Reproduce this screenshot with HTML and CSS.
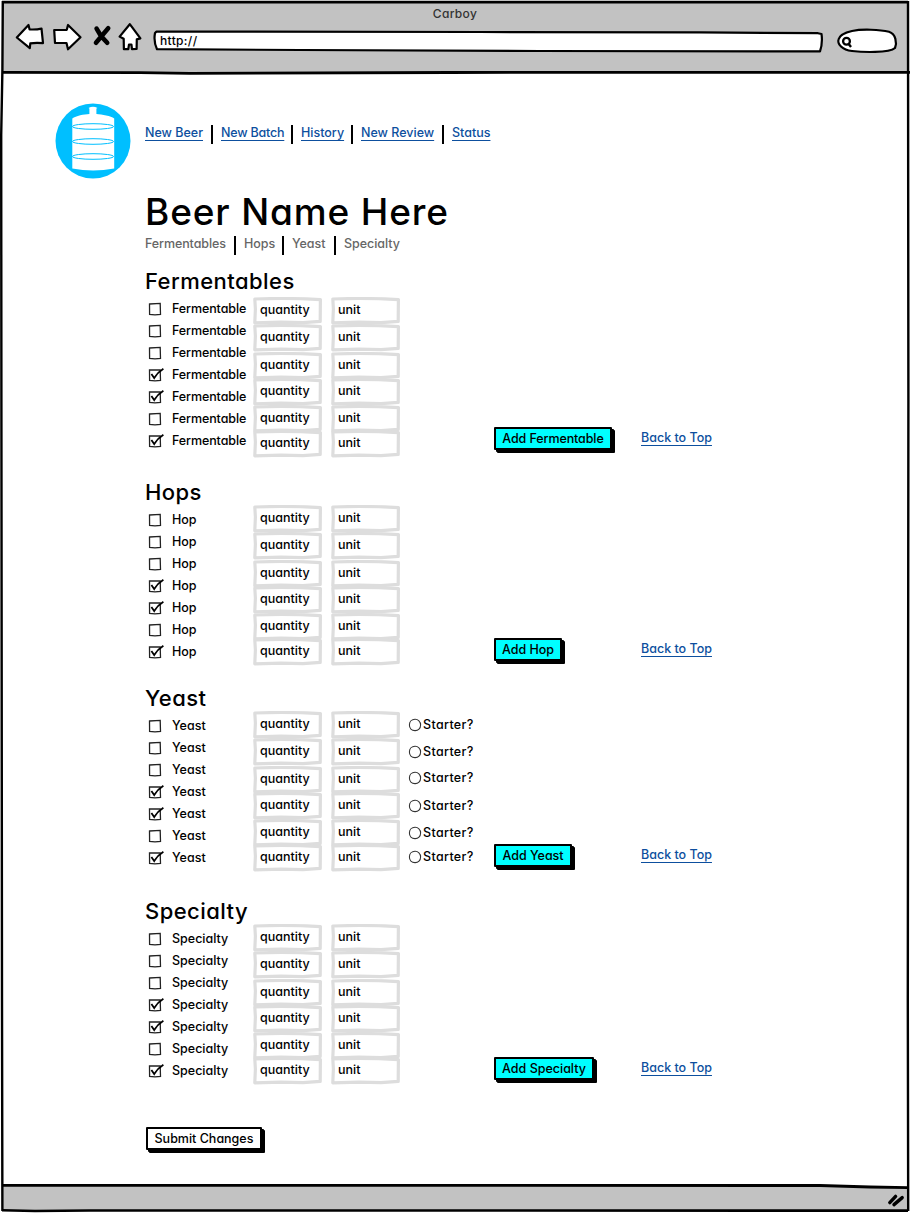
FILE: index.html
```html
<!DOCTYPE html>
<html lang="en">
<head>
<meta charset="utf-8">
<title>Carboy</title>
<link rel="stylesheet" href="styles.css">
</head>
<body>
<svg class="defs" width="0" height="0">
  <symbol id="box" viewBox="0 0 18 16"><path d="M2.5 3 L13.2 2.4 L13.5 13.4 L8 13.8 L2.6 13.4 Z" fill="#fff" stroke="#222" stroke-width="1.3"/></symbol>
  <symbol id="tick" viewBox="0 0 18 16"><path d="M2.5 3 L13.2 2.8 L13.5 13.4 L8 13.8 L2.6 13.4 Z" fill="#fff" stroke="#222" stroke-width="1.3"/><path d="M4.4 7 L7.2 11 Q10.5 5.5 16.4 1.8" fill="none" stroke="#000" stroke-width="1.8"/></symbol>
  <symbol id="field" viewBox="0 0 70 28"><path d="M1.8 2 Q35 .8 67.4 2.6 L67.2 24.4 L50 25.6 L28 25.2 L1.8 25.8 L2.4 12 Z" fill="#fff" stroke="#ddd" stroke-width="3.2" stroke-linejoin="round"/></symbol>
  <symbol id="radio" viewBox="0 0 14 14"><path d="M7 1.3 C10 1.2 12.6 3.5 12.6 6.9 C12.6 10.4 10.2 12.7 7 12.6 C3.6 12.6 1.4 10.2 1.4 7 C1.4 3.8 3.8 1.4 7 1.3 Z" fill="#fff" stroke="#333" stroke-width="1.1"/></symbol>
</svg>
<div class="window">
  <header class="chrome">
    <svg class="art" width="910" height="76" viewBox="0 0 910 76">
      <path d="M3 2 L908 3 L908 72 L500 71.5 L190 73.5 L3 72 Z" fill="#c2c2c2"/>
      <path d="M2 2.2 L908 2.2" stroke="#000" stroke-width="2.8"/>
      <path d="M3 72.3 L140 72.7 L190 73.4 L450 72.5 L910 72.3" fill="none" stroke="#000" stroke-width="2.8"/>
      <g fill="#fff" stroke="#000" stroke-width="2.2" stroke-linejoin="round">
        <path d="M16.8 37.5 L28.5 25 L29.6 29.4 Q36 29.8 41.5 28.6 L43 43.2 Q36 42.4 30.3 43.4 L29.8 48.2 Z"/>
        <path d="M80.5 37.2 L68 25 L66.8 29.8 L54.2 30 L55 43 L66.5 43 L68 49.3 Z"/>
        <path d="M129.8 24.2 L119.6 36.6 L123.7 38.8 L123.9 49.2 L128.3 49.2 L129 44.5 L131.4 44.5 L132 49.2 L136.6 49 L136.8 39.4 L140.4 38.4 Z"/>
        <path d="M155 33 L156.5 31.6 L480 32 L700 32.4 L818 33.2 L821.5 34 Q822.8 43 820 51.4 L540 51 L300 50 L157 49.2 Q153.4 42 155 33 Z"/>
        <path d="M852 31 C862 28.8 880 29.6 889 31.8 C896 34 897 43 895 48 C889 53.3 862 52.2 852 51 C842 50 837.2 44 838.5 39.5 C839.8 34.5 845 32.5 852 31 Z"/>
      </g>
      <path d="M96.6 28.6 L101 36 L107.2 42.8 M108.2 28.2 L102.5 35 L96 42.8" fill="none" stroke="#000" stroke-width="4.6" stroke-linecap="round"/>
      <circle cx="846.5" cy="41.3" r="3.4" fill="#fff" stroke="#000" stroke-width="2.3"/>
      <path d="M848.5 43.8 L851 47" stroke="#000" stroke-width="2.4"/>
    </svg>
    <div class="title">Carboy</div>
    <div class="url">http://</div>
  </header>

  <main class="page">
    <svg class="logo" width="76" height="76" viewBox="0 0 76 76">
      <circle cx="38" cy="38" r="37.5" fill="#00bfff"/>
      <path d="M33.5 5 Q38 2.5 42.5 5 L41.4 5.6 V11 C47 11.4 56 12.8 59.2 15.5 V65.5 Q38 69.5 17.3 65.5 V15.5 C21 12.6 29 11.4 34.4 11 V5.6 Z" fill="#fff"/>
      <g fill="#fff" stroke="#00bfff">
        <ellipse cx="38" cy="23.5" rx="20.5" ry="2.8"/><ellipse cx="38" cy="38.5" rx="20.5" ry="2.8"/><ellipse cx="38" cy="53.5" rx="20.5" ry="2.8"/>
      </g>
    </svg>
    <div class="content">
      <nav class="nav"><a class="w58">New Beer</a><a class="w62">New Batch</a><a class="w42">History</a><a class="w73">New Review</a><a>Status</a></nav>
      <h1>Beer Name Here</h1>
      <nav class="nav subnav"><a class="w80">Fermentables</a><a class="w30">Hops</a><a class="w34">Yeast</a><a>Specialty</a></nav>

      <section class="ferm">
        <h2>Fermentables</h2>
        <div class="body">
          <ul class="checks">
            <li><svg><use href="#box"/></svg>Fermentable</li><li><svg><use href="#box"/></svg>Fermentable</li><li><svg><use href="#box"/></svg>Fermentable</li><li><svg><use href="#tick"/></svg>Fermentable</li><li><svg><use href="#tick"/></svg>Fermentable</li><li><svg><use href="#box"/></svg>Fermentable</li><li><svg><use href="#tick"/></svg>Fermentable</li>
          </ul>
          <div class="fields">
            <label><svg><use href="#field"/></svg><span>quantity</span></label><label><svg><use href="#field"/></svg><span>unit</span></label>
            <label><svg><use href="#field"/></svg><span>quantity</span></label><label><svg><use href="#field"/></svg><span>unit</span></label>
            <label><svg><use href="#field"/></svg><span>quantity</span></label><label><svg><use href="#field"/></svg><span>unit</span></label>
            <label><svg><use href="#field"/></svg><span>quantity</span></label><label><svg><use href="#field"/></svg><span>unit</span></label>
            <label><svg><use href="#field"/></svg><span>quantity</span></label><label><svg><use href="#field"/></svg><span>unit</span></label>
            <label><svg><use href="#field"/></svg><span>quantity</span></label><label><svg><use href="#field"/></svg><span>unit</span></label>
          </div>
          <div class="starters"></div>
          <div class="action"><button class="b-ferm">Add Fermentable</button></div>
          <a class="top">Back to Top</a>
        </div>
      </section>

      <section class="hops">
        <h2>Hops</h2>
        <div class="body">
          <ul class="checks">
            <li><svg><use href="#box"/></svg>Hop</li><li><svg><use href="#box"/></svg>Hop</li><li><svg><use href="#box"/></svg>Hop</li><li><svg><use href="#tick"/></svg>Hop</li><li><svg><use href="#tick"/></svg>Hop</li><li><svg><use href="#box"/></svg>Hop</li><li><svg><use href="#tick"/></svg>Hop</li>
          </ul>
          <div class="fields">
            <label><svg><use href="#field"/></svg><span>quantity</span></label><label><svg><use href="#field"/></svg><span>unit</span></label>
            <label><svg><use href="#field"/></svg><span>quantity</span></label><label><svg><use href="#field"/></svg><span>unit</span></label>
            <label><svg><use href="#field"/></svg><span>quantity</span></label><label><svg><use href="#field"/></svg><span>unit</span></label>
            <label><svg><use href="#field"/></svg><span>quantity</span></label><label><svg><use href="#field"/></svg><span>unit</span></label>
            <label><svg><use href="#field"/></svg><span>quantity</span></label><label><svg><use href="#field"/></svg><span>unit</span></label>
            <label><svg><use href="#field"/></svg><span>quantity</span></label><label><svg><use href="#field"/></svg><span>unit</span></label>
          </div>
          <div class="starters"></div>
          <div class="action"><button class="b-hop">Add Hop</button></div>
          <a class="top">Back to Top</a>
        </div>
      </section>

      <section class="yeast">
        <h2>Yeast</h2>
        <div class="body">
          <ul class="checks">
            <li><svg><use href="#box"/></svg>Yeast</li><li><svg><use href="#box"/></svg>Yeast</li><li><svg><use href="#box"/></svg>Yeast</li><li><svg><use href="#tick"/></svg>Yeast</li><li><svg><use href="#tick"/></svg>Yeast</li><li><svg><use href="#box"/></svg>Yeast</li><li><svg><use href="#tick"/></svg>Yeast</li>
          </ul>
          <div class="fields">
            <label><svg><use href="#field"/></svg><span>quantity</span></label><label><svg><use href="#field"/></svg><span>unit</span></label>
            <label><svg><use href="#field"/></svg><span>quantity</span></label><label><svg><use href="#field"/></svg><span>unit</span></label>
            <label><svg><use href="#field"/></svg><span>quantity</span></label><label><svg><use href="#field"/></svg><span>unit</span></label>
            <label><svg><use href="#field"/></svg><span>quantity</span></label><label><svg><use href="#field"/></svg><span>unit</span></label>
            <label><svg><use href="#field"/></svg><span>quantity</span></label><label><svg><use href="#field"/></svg><span>unit</span></label>
            <label><svg><use href="#field"/></svg><span>quantity</span></label><label><svg><use href="#field"/></svg><span>unit</span></label>
          </div>
          <div class="starters">
            <label><svg><use href="#radio"/></svg>Starter?</label><label><svg><use href="#radio"/></svg>Starter?</label><label><svg><use href="#radio"/></svg>Starter?</label><label><svg><use href="#radio"/></svg>Starter?</label><label><svg><use href="#radio"/></svg>Starter?</label><label><svg><use href="#radio"/></svg>Starter?</label>
          </div>
          <div class="action"><button class="b-yeast">Add Yeast</button></div>
          <a class="top">Back to Top</a>
        </div>
      </section>

      <section class="spec">
        <h2>Specialty</h2>
        <div class="body">
          <ul class="checks">
            <li><svg><use href="#box"/></svg>Specialty</li><li><svg><use href="#box"/></svg>Specialty</li><li><svg><use href="#box"/></svg>Specialty</li><li><svg><use href="#tick"/></svg>Specialty</li><li><svg><use href="#tick"/></svg>Specialty</li><li><svg><use href="#box"/></svg>Specialty</li><li><svg><use href="#tick"/></svg>Specialty</li>
          </ul>
          <div class="fields">
            <label><svg><use href="#field"/></svg><span>quantity</span></label><label><svg><use href="#field"/></svg><span>unit</span></label>
            <label><svg><use href="#field"/></svg><span>quantity</span></label><label><svg><use href="#field"/></svg><span>unit</span></label>
            <label><svg><use href="#field"/></svg><span>quantity</span></label><label><svg><use href="#field"/></svg><span>unit</span></label>
            <label><svg><use href="#field"/></svg><span>quantity</span></label><label><svg><use href="#field"/></svg><span>unit</span></label>
            <label><svg><use href="#field"/></svg><span>quantity</span></label><label><svg><use href="#field"/></svg><span>unit</span></label>
            <label><svg><use href="#field"/></svg><span>quantity</span></label><label><svg><use href="#field"/></svg><span>unit</span></label>
          </div>
          <div class="starters"></div>
          <div class="action"><button class="b-spec">Add Specialty</button></div>
          <a class="top">Back to Top</a>
        </div>
      </section>

      <button class="submit">Submit Changes</button>
    </div>
  </main>

  <footer class="status">
    <svg width="910" height="32" viewBox="0 0 910 32">
      <path d="M3 4 L500 4 L908 6 L908 29 L3 29 Z" fill="#c2c2c2"/>
      <path d="M2 4.3 L820 4.5 L870 6 L908 6.7" fill="none" stroke="#000" stroke-width="2.8"/>
      <path d="M2 29.3 L35 30 L90 29.5 L908 29.6" fill="none" stroke="#000" stroke-width="2.6"/>
      <path d="M889.8 21.6 L895.6 15.4 M894 23.6 L902.2 16.6" stroke="#000" stroke-width="3.4" stroke-linecap="round"/>
    </svg>
  </footer>
  <svg class="sides" width="910" height="1213" viewBox="0 0 910 1213">
    <path d="M2.8 1 L2.4 70 L1.2 135 L1.4 400 L2 1000 L2.4 1211 M908 1 L908.4 400 L907.8 1000 L908.2 1211" fill="none" stroke="#000" stroke-width="2.4"/>
  </svg>
</div>
</body>
</html>
```
FILE: styles.css
```css
* { box-sizing: border-box; }
body {
  margin: 0;
  background: #fff;
  color: #000;
  font: 450 12.5px/22px Inter, "Liberation Sans", sans-serif;
  font-feature-settings: "cv11" 1;
  white-space: nowrap;
}
.defs { position: absolute; }
.window { position: relative; width: 910px; height: 1213px; display: flex; flex-direction: column; overflow: hidden; }
.sides { position: absolute; inset: 0; pointer-events: none; }

.chrome { position: relative; height: 76px; flex: none; }
.chrome .art { position: absolute; inset: 0; }
.title { position: relative; padding-top: 3px; text-align: center; color: #333; font-size: 12px; letter-spacing: .35px; }
.url { position: relative; padding: 5px 0 0 160px; font-size: 12px; letter-spacing: .35px; }

.page { flex: 1; display: flex; padding-left: 54.5px; min-height: 0; }
.logo { margin: 26.5px 14.5px 0 0; flex: none; }
.content { padding-top: 46px; }

.nav { display: flex; height: 22px; letter-spacing: 0; }
.nav a { display: flex; color: #0d4f9e; line-height: 21px; height: 17px; text-decoration: underline; text-underline-offset: 2.5px; text-decoration-thickness: 1px; }
.nav a::after { content: ""; width: 2px; height: 19px; margin: 3px 8px 0 auto; background: #000; flex: none; }
.nav a:last-child::after { display: none; }
.nav .w58 { width: 76px; }
.nav .w62 { width: 80px; letter-spacing: -.2px; }
.nav .w42 { width: 60px; }
.nav .w73 { width: 91px; }
.subnav a { color: #666; text-decoration: none; letter-spacing: -.05px; }
.subnav .w80 { width: 99px; letter-spacing: -.1px; }
.subnav .w30 { width: 48px; }
.subnav .w34 { width: 52px; }
h1 { margin: 43px 0 0; height: 46px; font-size: 37px; line-height: 50px; font-weight: 450; letter-spacing: .85px; }
.subnav { height: 34px; }

section { height: 206px; }
.ferm { height: 211px; }
.spec { height: 230px; }
.yeast { height: 213px; }
h2 { margin: 0; height: 28px; font-size: 22px; line-height: 28px; font-weight: 450; letter-spacing: .45px; }
.body { display: grid; grid-template-columns: 108px 156px 85px 147px auto; align-items: start; }
.checks { list-style: none; margin: 3px 0 0; padding: 0; letter-spacing: 0; }
.checks li { display: flex; align-items: center; height: 22px; padding-left: 1.5px; }
.checks svg { width: 18px; height: 16px; margin: -1px 7.5px 0 0; }
.ferm .checks { letter-spacing: -.1px; }
.fields { display: grid; grid-template-columns: 69px 69px; column-gap: 9px; grid-template-rows: 27px 28px 26px 27px 25px 27px; margin-top: -1px; }
.ferm .fields { margin-top: 2px; }
.fields label { position: relative; height: 27px; }
.fields svg { position: absolute; left: 0; top: 0; width: 70px; height: 28px; }
.fields span { position: relative; display: block; padding-left: 7px; line-height: 26px; }
.starters { display: grid; grid-template-rows: 27px 26px 28px 27px 24px 27px; letter-spacing: .35px; }
.starters label { display: flex; align-items: center; height: 26px; }
.starters svg { width: 14px; height: 14px; margin-left: -1px; margin-right: 1px; }
.action { padding-top: 132px; }
button { display: block; height: 23px; border: 2px solid #000; border-radius: 1px; background: #0ff; color: #000; font: inherit; font-feature-settings: inherit; line-height: 19px; padding: 0; text-align: center; box-shadow: 2px 2px 0 #000, 3px 3px 0 #000; }
.b-ferm { width: 118px; letter-spacing: -.1px; }
.b-hop { width: 68px; }
.b-yeast { width: 78px; }
.b-spec { width: 100px; }
.submit { width: 116px; background: #fff; margin-left: 1px; }
.top { margin-top: 132px; color: #0d4f9e; text-decoration: underline; text-underline-offset: 2.5px; text-decoration-thickness: 1px; }
.status { height: 32px; flex: none; }
.status svg { display: block; }
```
